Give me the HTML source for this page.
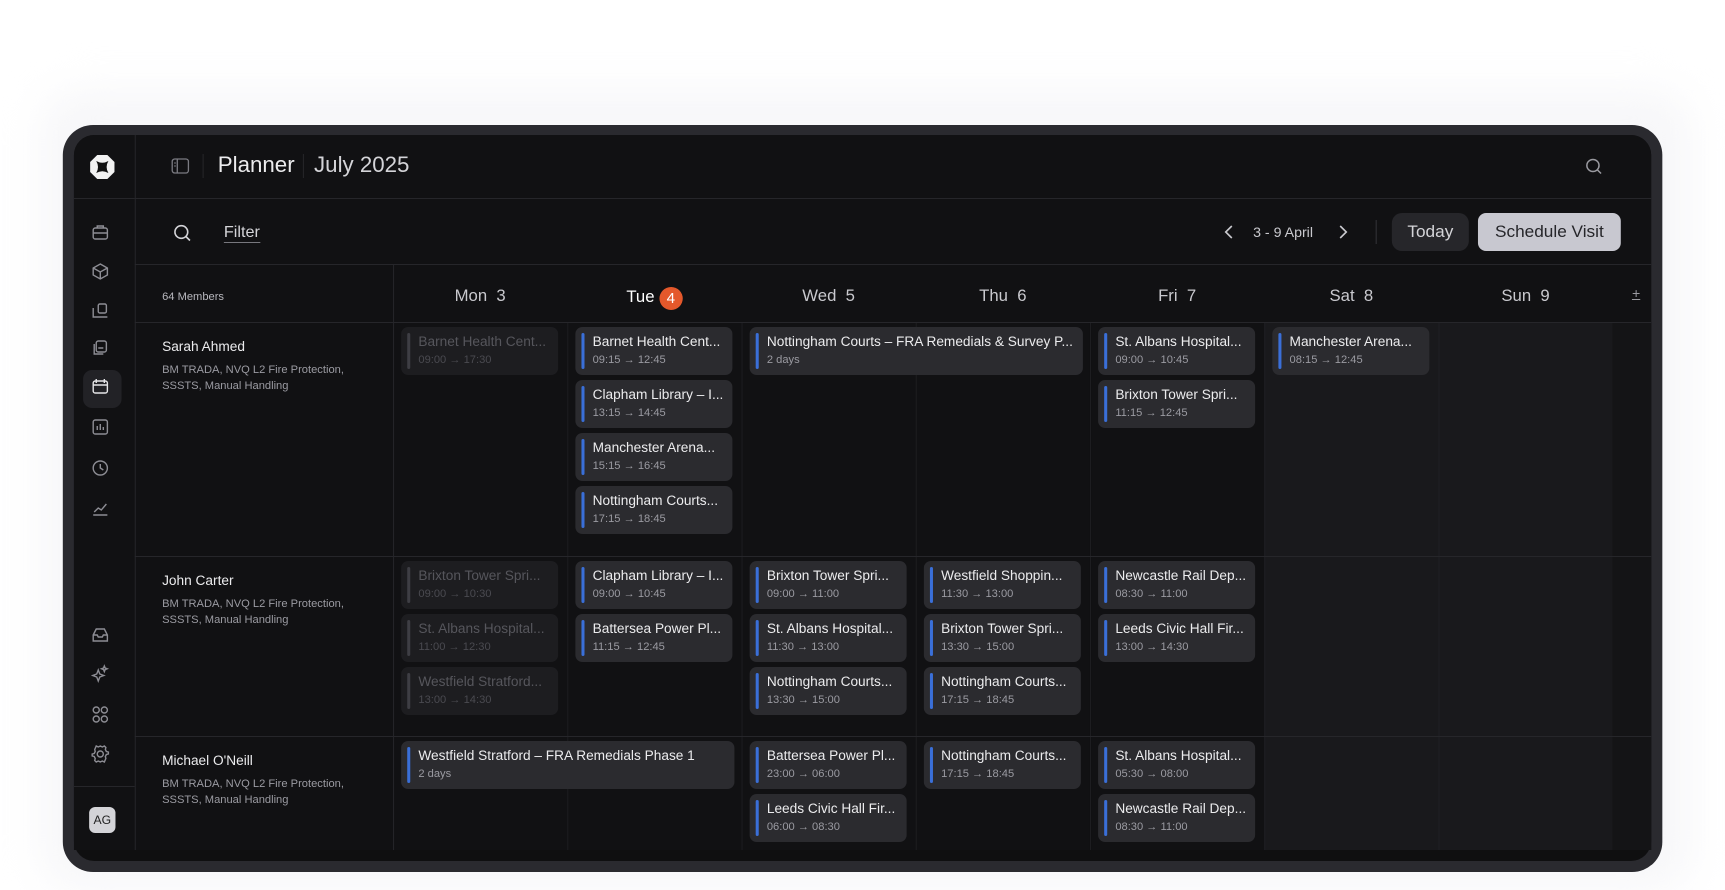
<!DOCTYPE html>
<html><head><meta charset="utf-8"><style>
*{box-sizing:border-box;margin:0;padding:0}
body{width:1725px;height:872px;background:#fff;font-family:"Liberation Sans",sans-serif;position:relative;overflow:hidden}
#w{position:absolute;left:0;top:0;width:1725px;height:872px;transform:scaleX(1.013);transform-origin:0 0}
#g{position:absolute;left:-4px;top:0;width:1725px;height:872px}
.shadow{position:absolute;left:40px;top:90px;width:1630px;height:800px;border-radius:40px;background:#f7f7f9;filter:blur(20px)}
.win{position:absolute;left:62px;top:125px;width:1579px;height:747px;background:#2a2a2f;border-radius:30px}
.in{position:absolute;left:73px;top:135px;width:1557px;height:726px;background:#0f0f10;border-radius:20px;overflow:hidden}
.a{position:absolute}
.hl{position:absolute;height:1px;background:#26262a}
.vl{position:absolute;width:1px;background:#26262a}
.c{position:absolute;width:155px;height:48px;background:#2b2b2f;border-radius:7px}
.c::before{content:"";position:absolute;left:6px;top:6px;bottom:6px;width:3px;border-radius:2px;background:#3a6fd8}
.c b{position:absolute;left:17px;top:7px;font-weight:normal;font-size:13.5px;color:#ececee;white-space:nowrap}
.c i{position:absolute;left:17px;top:27px;font-style:normal;font-size:11px;color:#9b9ba2;white-space:nowrap}
.c.f{background:#1d1d20}
.c.f::before{background:#3e3e44}
.c.f b{color:#56565c}.c.f i{color:#4a4a50}
.c.w{width:329px}
.dh{position:absolute;top:287px;width:172px;text-align:center;font-size:16.5px;color:#c9c9ce}
.nm{position:absolute;left:160px;font-size:13.5px;color:#ececee}
.sb{position:absolute;left:160px;font-size:11px;color:#9b9ba2;line-height:16px}
svg{position:absolute}
</style></head><body>
<div id="w">
<div class="shadow"></div>
<div class="win"></div>
<div class="in"></div>
<div class="a" style="left:73px;top:135px;width:1557px;height:715px;background:#111113;border-radius:20px 20px 0 0"></div>
<div id="g">
<div class="a" style="left:1252px;top:322px;width:344px;height:528px;background:#19191c"></div>
<div class="a" style="left:1596px;top:322px;width:38px;height:528px;background:#141416"></div>
<div class="vl" style="left:392px;top:264px;height:586px"></div>
<div class="vl" style="left:564px;top:322px;height:528px;background:#1d1d20"></div>
<div class="vl" style="left:736px;top:322px;height:528px;background:#1d1d20"></div>
<div class="vl" style="left:908px;top:322px;height:528px;background:#1d1d20"></div>
<div class="vl" style="left:1080px;top:322px;height:528px;background:#1d1d20"></div>
<div class="vl" style="left:1252px;top:322px;height:528px;background:#202024"></div>
<div class="vl" style="left:1424px;top:322px;height:528px;background:#202024"></div>
<div class="dh" style="left:392px">Mon&nbsp; 3</div>
<div class="dh" style="left:564px;color:#fff">Tue <span style="display:inline-block;width:23px;height:23px;border-radius:50%;background:#e4582b;color:#fff;line-height:23px;font-size:15px;vertical-align:-1px">4</span></div>
<div class="dh" style="left:736px">Wed&nbsp; 5</div>
<div class="dh" style="left:908px">Thu&nbsp; 6</div>
<div class="dh" style="left:1080px">Fri&nbsp; 7</div>
<div class="dh" style="left:1252px">Sat&nbsp; 8</div>
<div class="dh" style="left:1424px">Sun&nbsp; 9</div>
</div>
<div class="vl" style="left:133px;top:135px;height:715px"></div>
<div class="hl" style="left:133px;top:198px;width:1497px"></div>
<div class="hl" style="left:73px;top:198px;width:60px"></div>
<div class="hl" style="left:133px;top:264px;width:1497px"></div>
<div class="hl" style="left:133px;top:322px;width:1497px"></div>
<div class="hl" style="left:133px;top:556px;width:1497px"></div>
<div class="hl" style="left:133px;top:736px;width:1497px"></div>
<div class="hl" style="left:73px;top:786px;width:60px"></div>
<svg style="left:88px;top:154px" width="26" height="26" viewBox="0 0 26 26"><path d="M8 1h10l7 7v10l-7 7H8l-7-7V8z" fill="#f2f2f2"/><path d="M7 7 Q13 10.5 19 7 Q15.5 13 19 19 Q13 15.5 7 19 Q10.5 13 7 7Z" fill="#111"/></svg>
<div class="a" style="left:82px;top:370px;width:38px;height:38px;border-radius:9px;background:#222226"></div>
<svg style="left:90px;top:224px" width="18" height="300" viewBox="0 0 18 300" fill="none" stroke="#8d8d94" stroke-width="1.4">
<rect x="2" y="4" width="14" height="11" rx="2"/><path d="M6 4V2h6v2M2 9h14"/>
<path d="M9 40l7 4v7l-7 4-7-4v-7z M2 44l7 4 7-4M9 48v7"/>
<rect x="7" y="80" width="8" height="9" rx="1.5"/><path d="M2 84v9h14"/>
<rect x="5" y="117" width="10" height="11" rx="2"/><path d="M3 120v10h9M7 124h5"/>
<rect x="2" y="157" width="14" height="12" rx="2" stroke="#e6e6e8"/><path d="M2 161h14M5 155v4M13 155v4" stroke="#e6e6e8"/>
<rect x="2" y="196" width="14" height="14" rx="2"/><path d="M6 206v-4M9 206v-6M12 206v-3"/>
<circle cx="9" cy="244" r="7"/><path d="M9 240v4l3 2"/>
<path d="M2 291h14M3 288l4-4 3 2 5-6"/>
</svg>
<svg style="left:90px;top:626px" width="18" height="140" viewBox="0 0 18 140" fill="none" stroke="#8d8d94" stroke-width="1.4">
<path d="M2 9l3-6h8l3 6v6H2z M2 9h4l1 2h4l1-2h4"/>
<path d="M7 44l1.5 4 4 1.5-4 1.5L7 55l-1.5-4-4-1.5 4-1.5z M13 40l.8 2 2 .8-2 .8-.8 2-.8-2-2-.8 2-.8z"/>
<circle cx="5" cy="84" r="3"/><circle cx="13" cy="84" r="3"/><circle cx="5" cy="93" r="3"/><circle cx="13" cy="93" r="3"/>
<circle cx="9" cy="128" r="3"/><path d="M9 120l2 1 2-1 1.5 1.5-.5 2 1 2 2 .5v2l-2 .5-1 2 .5 2L13 136l-2-1-2 1-2-1-2 1-1.5-1.5.5-2-1-2-2-.5v-2l2-.5 1-2-.5-2L5 120l2 1z"/>
</svg>
<div class="a" style="left:88px;top:807px;width:26px;height:26px;border-radius:6px;background:#d4d4d8;color:#222;font-size:12px;text-align:center;line-height:26px">AG</div>
<svg style="left:169px;top:158px" width="18" height="16" viewBox="0 0 18 16" fill="none" stroke="#7b7b82" stroke-width="1.3"><rect x="1" y="1" width="16" height="14" rx="2.5"/><path d="M6 1v14M3 5h1.5M3 8h1.5"/></svg>
<div class="vl" style="left:200px;top:154px;height:24px"></div>
<div class="a" style="left:215px;top:152px;font-size:22px;color:#ececee">Planner</div>
<div class="vl" style="left:299px;top:154px;height:24px"></div>
<div class="a" style="left:310px;top:152px;font-size:22px;color:#d4d4d8">July 2025</div>
<svg style="left:1565px;top:158px" width="17" height="17" viewBox="0 0 17 17" fill="none" stroke="#9a9aa0" stroke-width="1.5"><circle cx="7.5" cy="7.5" r="6"/><path d="M12 12l3.5 3.5"/></svg>
<svg style="left:171px;top:224px" width="18" height="18" viewBox="0 0 18 18" fill="none" stroke="#d4d4d8" stroke-width="1.6"><circle cx="8" cy="8" r="6.3"/><path d="M12.5 12.5l4 4"/></svg>
<div class="a" style="left:221px;top:223px;font-size:16px;color:#d4d4d8;border-bottom:1px solid #77777d;line-height:19px">Filter</div>
<svg style="left:1208px;top:224px" width="10" height="16" viewBox="0 0 10 16" fill="none" stroke="#c9c9ce" stroke-width="1.6"><path d="M8 2L2 8l6 6"/></svg>
<div class="a" style="left:1237px;top:224px;font-size:14px;color:#c9c9ce">3 - 9 April</div>
<svg style="left:1321px;top:224px" width="10" height="16" viewBox="0 0 10 16" fill="none" stroke="#c9c9ce" stroke-width="1.6"><path d="M2 2l6 6-6 6"/></svg>
<div class="vl" style="left:1358px;top:220px;height:24px;background:#333338"></div>
<div class="a" style="left:1374px;top:213px;width:76px;height:38px;border-radius:10px;background:#26262a;color:#d4d4d8;font-size:17px;text-align:center;line-height:38px">Today</div>
<div class="a" style="left:1459px;top:213px;width:141px;height:38px;border-radius:8px;background:#c8c8d0;color:#26262a;font-size:17px;text-align:center;line-height:38px">Schedule Visit</div>
<div class="a" style="left:160px;top:291px;font-size:11px;color:#b8b8be">64 Members</div>
<div class="a" style="left:1611px;top:285px;font-size:14px;color:#9a9aa0;text-decoration:underline">+</div>
<div class="nm" style="top:339px">Sarah Ahmed</div>
<div class="sb" style="top:362px">BM TRADA, NVQ L2 Fire Protection,<br>SSSTS, Manual Handling</div>
<div class="nm" style="top:573px">John Carter</div>
<div class="sb" style="top:596px">BM TRADA, NVQ L2 Fire Protection,<br>SSSTS, Manual Handling</div>
<div class="nm" style="top:753px">Michael O'Neill</div>
<div class="sb" style="top:776px">BM TRADA, NVQ L2 Fire Protection,<br>SSSTS, Manual Handling</div>
<div style="position:absolute;left:-5px;top:0">
<div class="c f" style="left:401px;top:327px"><b>Barnet Health Cent...</b><i>09:00 → 17:30</i></div>
<div class="c" style="left:573px;top:327px"><b>Barnet Health Cent...</b><i>09:15 → 12:45</i></div>
<div class="c" style="left:573px;top:380px"><b>Clapham Library – I...</b><i>13:15 → 14:45</i></div>
<div class="c" style="left:573px;top:433px"><b>Manchester Arena...</b><i>15:15 → 16:45</i></div>
<div class="c" style="left:573px;top:486px"><b>Nottingham Courts...</b><i>17:15 → 18:45</i></div>
<div class="c w" style="left:745px;top:327px"><b>Nottingham Courts – FRA Remedials &amp; Survey P...</b><i>2 days</i></div>
<div class="c" style="left:1089px;top:327px"><b>St. Albans Hospital...</b><i>09:00 → 10:45</i></div>
<div class="c" style="left:1089px;top:380px"><b>Brixton Tower Spri...</b><i>11:15 → 12:45</i></div>
<div class="c" style="left:1261px;top:327px"><b>Manchester Arena...</b><i>08:15 → 12:45</i></div>
<div class="c f" style="left:401px;top:561px"><b>Brixton Tower Spri...</b><i>09:00 → 10:30</i></div>
<div class="c f" style="left:401px;top:614px"><b>St. Albans Hospital...</b><i>11:00 → 12:30</i></div>
<div class="c f" style="left:401px;top:667px"><b>Westfield Stratford...</b><i>13:00 → 14:30</i></div>
<div class="c" style="left:573px;top:561px"><b>Clapham Library – I...</b><i>09:00 → 10:45</i></div>
<div class="c" style="left:573px;top:614px"><b>Battersea Power Pl...</b><i>11:15 → 12:45</i></div>
<div class="c" style="left:745px;top:561px"><b>Brixton Tower Spri...</b><i>09:00 → 11:00</i></div>
<div class="c" style="left:745px;top:614px"><b>St. Albans Hospital...</b><i>11:30 → 13:00</i></div>
<div class="c" style="left:745px;top:667px"><b>Nottingham Courts...</b><i>13:30 → 15:00</i></div>
<div class="c" style="left:917px;top:561px"><b>Westfield Shoppin...</b><i>11:30 → 13:00</i></div>
<div class="c" style="left:917px;top:614px"><b>Brixton Tower Spri...</b><i>13:30 → 15:00</i></div>
<div class="c" style="left:917px;top:667px"><b>Nottingham Courts...</b><i>17:15 → 18:45</i></div>
<div class="c" style="left:1089px;top:561px"><b>Newcastle Rail Dep...</b><i>08:30 → 11:00</i></div>
<div class="c" style="left:1089px;top:614px"><b>Leeds Civic Hall Fir...</b><i>13:00 → 14:30</i></div>
<div class="c w" style="left:401px;top:741px"><b>Westfield Stratford – FRA Remedials Phase 1</b><i>2 days</i></div>
<div class="c" style="left:745px;top:741px"><b>Battersea Power Pl...</b><i>23:00 → 06:00</i></div>
<div class="c" style="left:745px;top:794px"><b>Leeds Civic Hall Fir...</b><i>06:00 → 08:30</i></div>
<div class="c" style="left:917px;top:741px"><b>Nottingham Courts...</b><i>17:15 → 18:45</i></div>
<div class="c" style="left:1089px;top:741px"><b>St. Albans Hospital...</b><i>05:30 → 08:00</i></div>
<div class="c" style="left:1089px;top:794px"><b>Newcastle Rail Dep...</b><i>08:30 → 11:00</i></div>
</div>
</div>
</body></html>
